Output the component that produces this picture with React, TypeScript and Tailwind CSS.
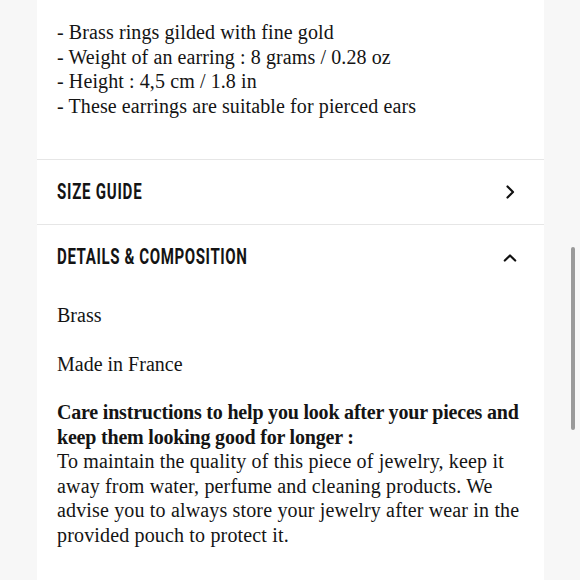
import React from "react";

const serif = { fontFamily: '"Liberation Serif", "Times New Roman", serif' };
const heading = { fontFamily: 'Roboto, "Liberation Sans", sans-serif' };

function ChevronRight() {
  return (
    <svg width="14" height="14" viewBox="0 0 14 14" fill="none">
      <path d="M4.5 1.5 L10 7 L4.5 12.5" stroke="#111" strokeWidth="2.2" strokeLinecap="round" strokeLinejoin="round" />
    </svg>
  );
}

function ChevronUp() {
  return (
    <svg width="14" height="14" viewBox="0 0 14 14" fill="none">
      <path d="M1.8 9.5 L7 4.5 L12.2 9.5" stroke="#111" strokeWidth="2.2" strokeLinecap="round" strokeLinejoin="round" />
    </svg>
  );
}

export default function App() {
  return (
    <div className="relative w-[580px] h-[580px] overflow-hidden bg-[#f7f7f7]">
      <div className="ml-[37px] w-[507px] h-[580px] bg-white text-[#141414]">
        <div
          className="pl-[20px] pr-[20px] pt-[20px] pb-[41px] text-[20px] leading-[24.5px] tracking-[0.005em]"
          style={serif}
        >
          <p>- Brass rings gilded with fine gold</p>
          <p>- Weight of an earring : 8 grams / 0.28 oz</p>
          <p>- Height : 4,5 cm / 1.8 in</p>
          <p>- These earrings are suitable for pierced ears</p>
        </div>
        <div className="border-t border-[#e6e6e6] h-[65px] flex items-center justify-between pl-[20px] pr-[27px]">
          <span
            className="inline-block origin-left scale-x-[0.7] font-bold text-[21.5px] tracking-[0.05em] whitespace-nowrap"
            style={heading}
          >
            SIZE GUIDE
          </span>
          <ChevronRight />
        </div>
        <div className="border-t border-[#e6e6e6] h-[66px] flex items-center justify-between pl-[20px] pr-[27px]">
          <span
            className="inline-block origin-left scale-x-[0.7] font-bold text-[21.5px] tracking-[0.04em] whitespace-nowrap"
            style={heading}
          >
            DETAILS &amp; COMPOSITION
          </span>
          <ChevronUp />
        </div>
        <div className="pl-[20px] pr-[20px] pt-[13px] text-[20px] leading-[24.5px] whitespace-nowrap" style={serif}>
          <p>Brass</p>
          <p className="mt-[24px]">Made in France</p>
          <p className="mt-[24px] font-bold tracking-[-0.01em]">
            Care instructions to help you look after your pieces and
            <br />
            keep them looking good for longer :
          </p>
          <p className="tracking-[0.008em]">
            To maintain the quality of this piece of jewelry, keep it
            <br />
            away from water, perfume and cleaning products. We
            <br />
            advise you to always store your jewelry after wear in the
            <br />
            provided pouch to protect it.
          </p>
        </div>
      </div>
      <div className="absolute left-[571px] top-[247px] w-[4px] h-[183px] rounded-full bg-[#9a9a9a]" />
    </div>
  );
}
